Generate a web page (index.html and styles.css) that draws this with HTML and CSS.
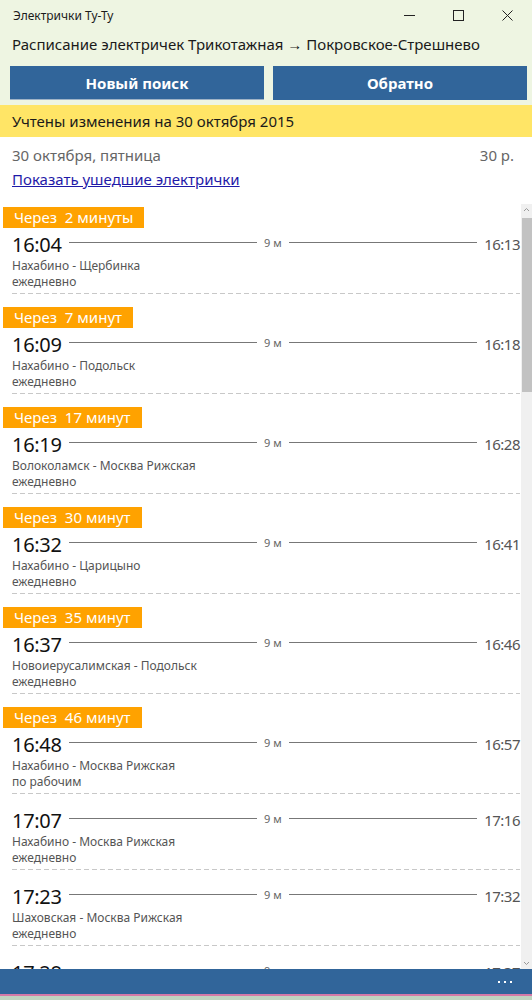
FILE: index.html
```html
<!DOCTYPE html>
<html lang="ru">
<head>
    <meta charset="UTF-8">
    <meta name="viewport" content="width=device-width, initial-scale=1.0">
    <title>Электрички Ту-Ту</title>
    <link rel="stylesheet" href="styles.css">
</head>
<body>
    <div class="titlebar">
        <span class="app-name">Электрички Ту-Ту</span>
        <div class="win-controls">
            <span class="win-btn"><svg width="11" height="11" viewBox="0 0 11 11"><path d="M0 5.5H11" stroke="#222" stroke-width="1"/></svg></span>
            <span class="win-btn"><svg width="11" height="11" viewBox="0 0 11 11"><rect x="0.5" y="0.5" width="10" height="10" fill="none" stroke="#222" stroke-width="1"/></svg></span>
            <span class="win-btn"><svg width="11" height="11" viewBox="0 0 11 11"><path d="M0.5 0.5L10.5 10.5M10.5 0.5L0.5 10.5" stroke="#222" stroke-width="1"/></svg></span>
        </div>
    </div>

    <div class="route-title">Расписание электричек Трикотажная → Покровское-Стрешнево</div>

    <div class="actions">
        <button class="action-btn first">Новый поиск</button>
        <button class="action-btn">Обратно</button>
    </div>

    <div class="notice">Учтены изменения на 30 октября 2015</div>

    <div class="day">
        <span>30 октября, пятница</span>
        <span>30 р.</span>
    </div>
    <a class="gone-link" href="#">Показать ушедшие электрички</a>

    <div class="list">
        <div class="trains">
            <div class="train">
                <span class="badge">Через&nbsp; 2 минуты</span>
                <div class="row">
                    <span class="time">16:04</span><span class="line"></span><span class="dur">9 м</span><span class="line"></span><span class="time end">16:13</span>
                </div>
                <div class="info">Нахабино - Щербинка</div>
                <div class="info">ежедневно</div>
            </div>
            <div class="train">
                <span class="badge">Через&nbsp; 7 минут</span>
                <div class="row">
                    <span class="time">16:09</span><span class="line"></span><span class="dur">9 м</span><span class="line"></span><span class="time end">16:18</span>
                </div>
                <div class="info">Нахабино - Подольск</div>
                <div class="info">ежедневно</div>
            </div>
            <div class="train">
                <span class="badge">Через&nbsp; 17 минут</span>
                <div class="row">
                    <span class="time">16:19</span><span class="line"></span><span class="dur">9 м</span><span class="line"></span><span class="time end">16:28</span>
                </div>
                <div class="info">Волоколамск - Москва Рижская</div>
                <div class="info">ежедневно</div>
            </div>
            <div class="train">
                <span class="badge">Через&nbsp; 30 минут</span>
                <div class="row">
                    <span class="time">16:32</span><span class="line"></span><span class="dur">9 м</span><span class="line"></span><span class="time end">16:41</span>
                </div>
                <div class="info">Нахабино - Царицыно</div>
                <div class="info">ежедневно</div>
            </div>
            <div class="train">
                <span class="badge">Через&nbsp; 35 минут</span>
                <div class="row">
                    <span class="time">16:37</span><span class="line"></span><span class="dur">9 м</span><span class="line"></span><span class="time end">16:46</span>
                </div>
                <div class="info">Новоиерусалимская - Подольск</div>
                <div class="info">ежедневно</div>
            </div>
            <div class="train">
                <span class="badge">Через&nbsp; 46 минут</span>
                <div class="row">
                    <span class="time">16:48</span><span class="line"></span><span class="dur">9 м</span><span class="line"></span><span class="time end">16:57</span>
                </div>
                <div class="info">Нахабино - Москва Рижская</div>
                <div class="info">по рабочим</div>
            </div>
            <div class="train">
                <div class="row">
                    <span class="time">17:07</span><span class="line"></span><span class="dur">9 м</span><span class="line"></span><span class="time end">17:16</span>
                </div>
                <div class="info">Нахабино - Москва Рижская</div>
                <div class="info">ежедневно</div>
            </div>
            <div class="train">
                <div class="row">
                    <span class="time">17:23</span><span class="line"></span><span class="dur">9 м</span><span class="line"></span><span class="time end">17:32</span>
                </div>
                <div class="info">Шаховская - Москва Рижская</div>
                <div class="info">ежедневно</div>
            </div>
            <div class="train">
                <div class="row">
                    <span class="time">17:28</span><span class="line"></span><span class="dur">9 м</span><span class="line"></span><span class="time end">17:37</span>
                </div>
                <div class="info">Нахабино - Москва Рижская</div>
                <div class="info">ежедневно</div>
            </div>
        </div>
        <div class="scrollbar">
            <svg class="arrow" width="11" height="12" viewBox="0 0 11 12"><path d="M3 7L5.5 4.5L8 7" fill="none" stroke="#999" stroke-width="1"/></svg>
            <div class="thumb"></div>
            <div class="track"></div>
            <svg class="arrow" width="11" height="12" viewBox="0 0 11 12"><path d="M3 5L5.5 7.5L8 5" fill="none" stroke="#999" stroke-width="1"/></svg>
        </div>
    </div>

    <div class="appbar">
        <span class="dots"><i></i><i></i><i></i></span>
    </div>
    <div class="edge"></div>
</body>
</html>
```

FILE: styles.css
```css
body {
    font-family: "Noto Sans", "Open Sans", sans-serif;
    background-color: #eef5e2;
    color: #1a1a1a;
    margin: 0;
    width: 532px;
    height: 1000px;
    display: flex;
    flex-direction: column;
    overflow: hidden;
}
.titlebar {
    height: 30px;
    display: flex;
    align-items: center;
    justify-content: space-between;
    padding-left: 13px;
    font-size: 12px;
}
.win-controls {
    display: flex;
    height: 30px;
}
.win-btn {
    width: 49px;
    display: flex;
    align-items: center;
    justify-content: center;
}
.route-title {
    height: 28px;
    line-height: 28px;
    padding: 0 12px;
    font-size: 15px;
    white-space: nowrap;
}
.actions {
    display: flex;
    gap: 9px;
    padding: 8px 5px 5px 10px;
}
.action-btn {
    flex: 1;
    height: 34px;
    border: none;
    background-color: #31659a;
    color: #fff;
    font-family: inherit;
    font-size: 15px;
    font-weight: bold;
}
.action-btn.first {
    border-bottom: 1px solid #9fb3c6;
}
.notice {
    height: 32px;
    line-height: 32px;
    padding: 0 12px;
    background-color: #ffe566;
    font-size: 15px;
}
.day {
    display: flex;
    justify-content: space-between;
    padding: 6px 18px 0 12px;
    line-height: 24px;
    font-size: 15px;
    color: #666;
    background-color: #fff;
}
.gone-link {
    display: block;
    line-height: 24px;
    padding: 0 12px 13px;
    font-size: 15px;
    color: #1f1aa8;
    background-color: #fff;
}
.list {
    flex: 1;
    display: flex;
    overflow: hidden;
    background-color: #fff;
}
.trains {
    flex: 1;
    padding: 2px 0 0 12px;
}
.train {
    padding-bottom: 4px;
    margin-bottom: 12px;
    margin-right: 1px;
    background-image: repeating-linear-gradient(to right, #c8c8c8 0 5px, transparent 5px 8px);
    background-size: 100% 1px;
    background-position: left bottom;
    background-repeat: no-repeat;
}
.badge {
    display: inline-block;
    height: 21px;
    line-height: 21px;
    margin-left: -9px;
    margin-bottom: 2px;
    padding: 0 11px;
    background-color: #ffa200;
    color: #fff;
    font-size: 15px;
}
.row {
    height: 28px;
    display: flex;
    align-items: center;
    gap: 7px;
}
.time {
    font-size: 20px;
    letter-spacing: -0.3px;
    color: #111;
}
.time.end {
    font-size: 15px;
    letter-spacing: -0.5px;
    color: #555;
}
.line {
    flex: 1;
    height: 1px;
    background-color: #777;
    margin-bottom: 3px;
}
.dur {
    font-size: 11px;
    color: #666;
    margin-bottom: 3px;
}
.info {
    font-size: 12px;
    line-height: 16px;
    color: #555;
}
.scrollbar {
    width: 11px;
    display: flex;
    flex-direction: column;
    background-color: #f0f0f0;
}
.arrow {
    flex: none;
}
.thumb {
    height: 174px;
    margin: 2px 0 0 1px;
    background-color: #c2c2c2;
}
.track {
    flex: 1;
}
.appbar {
    height: 25px;
    background-color: #31659a;
    display: flex;
    justify-content: flex-end;
    align-items: center;
    padding-right: 20px;
}
.dots {
    display: flex;
    gap: 4px;
}
.dots i {
    width: 2px;
    height: 2px;
    background-color: #fff;
}
.edge {
    height: 6px;
    border-top: 2px solid #d47aa8;
    box-sizing: border-box;
    background-color: #c0d4c0;
}
```
